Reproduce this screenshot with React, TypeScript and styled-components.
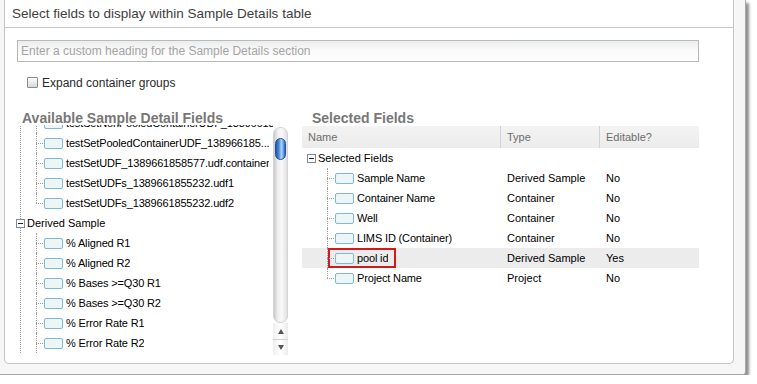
import styled, { createGlobalStyle } from "styled-components"

const GlobalStyle = createGlobalStyle`
	html, body {
		margin: 0;
		padding: 0;
		background: #fff;
	}
	body {
		font-family: "Liberation Sans", Arial, sans-serif;
	}
`

const Frame = styled.div`
	box-sizing: border-box;
	width: 746px;
	height: 375px;
	padding-left: 4px;
	background: #f6f6f6;
	border-right: 1px solid #a8a8a8;
	border-bottom: 1px solid #a8a8a8;
	border-bottom-right-radius: 3px;
	box-shadow: 3px 3px 3px rgba(0, 0, 0, 0.45);
`

const Panel = styled.div`
	box-sizing: border-box;
	width: 730px;
	height: 364px;
	background: #fff;
	border: 1px solid #c4c4c4;
	border-top: none;
	border-radius: 0 0 5px 5px;
	overflow: hidden;
`

const Header = styled.div`
	height: 27px;
	display: flex;
	align-items: center;
	padding-left: 7px;
	border-bottom: 1px solid #c6c6c6;
	font-size: 13.5px;
	color: #3e3e3e;
`

const HeadingInput = styled.input`
	display: block;
	box-sizing: border-box;
	width: 682px;
	height: 22px;
	margin: 12px 0 0 12px;
	padding: 0 3px;
	border: 1px solid #b9b9b9;
	background: linear-gradient(#eaecee, #f9f9f9 45%, #fff);
	font: 12px "Liberation Sans", Arial, sans-serif;
	color: #333;
	outline: none;

	&::placeholder {
		color: #a4a4a4;
	}
`

const CheckRow = styled.label`
	display: flex;
	align-items: center;
	gap: 4px;
	height: 11px;
	margin: 15px 0 0 22px;
	font-size: 12px;
	color: #2a2a2a;
`

const CheckBox = styled.span`
	box-sizing: border-box;
	width: 11px;
	height: 11px;
	border: 1px solid #8c8c8c;
	border-radius: 1px;
	background: linear-gradient(#fff, #d9d9d9);
`

const Columns = styled.div`
	display: grid;
	grid-template-columns: 272px 397px;
	column-gap: 14px;
	margin-top: 23px;
	padding-left: 11px;
`

const Column = styled.div`
	display: flex;
	flex-direction: column;
`

const SectionTitle = styled.div<{ $indent: number }>`
	height: 14px;
	line-height: 14px;
	padding-left: ${(p) => p.$indent}px;
	font-size: 14px;
	font-weight: bold;
	color: #777;
	white-space: nowrap;
`

const TreeViewport = styled.div`
	display: flex;
	height: 230px;
`

const TreeList = styled.div`
	flex: 1;
	overflow: hidden;
`

const TreeBody = styled.div`
	margin: -12px 0 0 4px;
	border-left: 1px dotted #9c9c9c;
`

const NodeRow = styled.div<{ $pad: number }>`
	display: flex;
	align-items: center;
	height: 20px;
	padding-left: ${(p) => p.$pad}px;
	font-size: 11px;
	color: #000;
	white-space: nowrap;
`

const Toggle = styled.span<{ $shift?: number }>`
	position: relative;
	flex: none;
	box-sizing: border-box;
	width: 9px;
	height: 9px;
	margin-left: ${(p) => p.$shift ?? 0}px;
	margin-right: 2px;
	border: 1px solid #7d8a99;
	background: #fff;

	&::after {
		content: "";
		position: absolute;
		left: 1px;
		right: 1px;
		top: 3px;
		height: 1px;
		background: #222;
	}
`

const LeafRow = styled.div<{ $line: number; $last?: boolean }>`
	position: relative;
	display: flex;
	align-items: center;
	height: 20px;
	padding-left: ${(p) => p.$line + 8}px;
	font-size: 11px;
	letter-spacing: -0.15px;
	color: #000;
	white-space: nowrap;

	&::before {
		content: "";
		position: absolute;
		left: ${(p) => p.$line}px;
		top: 0;
		height: ${(p) => (p.$last ? "10px" : "100%")};
		border-left: 1px dotted #9c9c9c;
	}

	&::after {
		content: "";
		position: absolute;
		left: ${(p) => p.$line}px;
		top: 10px;
		width: 7px;
		border-top: 1px dotted #9c9c9c;
	}
`

const FieldIcon = styled.span`
	flex: none;
	box-sizing: border-box;
	width: 19px;
	height: 11px;
	margin-right: 3px;
	border: 1px solid #7cbad6;
	border-radius: 2px;
	background: #eef5f7;
`

const Label = styled.span`
	overflow: hidden;
`

const Marked = styled.span`
	position: relative;
	display: flex;
	align-items: center;
	height: 100%;

	&::after {
		content: "";
		position: absolute;
		top: 0;
		bottom: 0;
		left: -7px;
		right: -8px;
		border: 2px solid #d11b1b;
	}
`

const Scrollbar = styled.div`
	flex: none;
	display: flex;
	flex-direction: column;
	width: 15px;
`

const Track = styled.div`
	flex: 1;
	box-sizing: border-box;
	margin-top: 2px;
	padding-top: 10px;
	border: 1px solid #d3d3d3;
	border-radius: 7px;
	background: linear-gradient(to right, #c8c8c8, #ececec 25%, #f9f9f9 60%, #e0e0e0);
`

const Thumb = styled.div`
	box-sizing: border-box;
	width: 11px;
	height: 22px;
	margin-left: 1px;
	border: 1px solid #244f95;
	border-radius: 6px;
	background: linear-gradient(to right, #1d54a8, #4f8fe0 35%, #b0d6fc 60%, #5b97e0 85%, #2b62b5);
`

const ArrowButton = styled.div<{ $down?: boolean }>`
	display: flex;
	align-items: center;
	justify-content: center;
	height: 15px;
	border-top: 1px solid ${(p) => (p.$down ? "#cfcfcf" : "transparent")};
	background: linear-gradient(to right, #efefef, #fff 50%, #ebebeb);

	&::before {
		content: "";
		border-left: 3px solid transparent;
		border-right: 3px solid transparent;
		${(p) => (p.$down ? "border-top: 5px solid #555;" : "border-bottom: 5px solid #555;")}
	}
`

const TableHead = styled.div`
	display: grid;
	grid-template-columns: 198px 99px 1fr;
	height: 22px;
	margin-top: 1px;
	background: linear-gradient(#f3f3f3, #ececec);
`

const HeadCell = styled.div<{ $first?: boolean }>`
	display: flex;
	align-items: center;
	padding-left: 6px;
	border-left: ${(p) => (p.$first ? "none" : "1px solid #d2d2d2")};
	font-size: 11px;
	color: #6c6c6c;
`

const TableRow = styled.div<{ $selected?: boolean }>`
	display: grid;
	grid-template-columns: 198px 99px 1fr;
	height: 20px;
	background: ${(p) => (p.$selected ? "#ececec" : "transparent")};
`

const Cell = styled.div`
	display: flex;
	align-items: center;
	padding-left: 7px;
	font-size: 11px;
	color: #000;
	white-space: nowrap;
`

const availableTop = [
	"testSetNonPooledContainerUDF_138966185...",
	"testSetPooledContainerUDF_138966185...",
	"testSetUDF_1389661858577.udf.container",
	"testSetUDFs_1389661855232.udf1",
	"testSetUDFs_1389661855232.udf2"
]

const derived = [
	"% Aligned R1",
	"% Aligned R2",
	"% Bases >=Q30 R1",
	"% Bases >=Q30 R2",
	"% Error Rate R1",
	"% Error Rate R2"
]

const selected = [
	{ name: "Sample Name", type: "Derived Sample", editable: "No" },
	{ name: "Container Name", type: "Container", editable: "No" },
	{ name: "Well", type: "Container", editable: "No" },
	{ name: "LIMS ID (Container)", type: "Container", editable: "No" },
	{ name: "pool id", type: "Derived Sample", editable: "Yes", marked: true },
	{ name: "Project Name", type: "Project", editable: "No" }
]

export default function App() {
	return (
		<>
			<GlobalStyle />
			<Frame>
				<Panel>
					<Header>Select fields to display within Sample Details table</Header>
					<HeadingInput placeholder="Enter a custom heading for the Sample Details section" />
					<CheckRow>
						<CheckBox />
						Expand container groups
					</CheckRow>
					<Columns>
						<Column>
							<SectionTitle $indent={6}>Available Sample Detail Fields</SectionTitle>
							<TreeViewport>
								<TreeList>
									<TreeBody>
										{availableTop.map((field, i) => (
											<LeafRow key={field} $line={15} $last={i === availableTop.length - 1}>
												<FieldIcon />
												<Label>{field}</Label>
											</LeafRow>
										))}
										<NodeRow $pad={0}>
											<Toggle $shift={-5} />
											Derived Sample
										</NodeRow>
										{derived.map((field) => (
											<LeafRow key={field} $line={15}>
												<FieldIcon />
												<Label>{field}</Label>
											</LeafRow>
										))}
									</TreeBody>
								</TreeList>
								<Scrollbar>
									<Track>
										<Thumb />
									</Track>
									<ArrowButton />
									<ArrowButton $down />
								</Scrollbar>
							</TreeViewport>
						</Column>
						<Column>
							<SectionTitle $indent={10}>Selected Fields</SectionTitle>
							<TableHead>
								<HeadCell $first>Name</HeadCell>
								<HeadCell>Type</HeadCell>
								<HeadCell>Editable?</HeadCell>
							</TableHead>
							<TableRow>
								<NodeRow $pad={5}>
									<Toggle />
									Selected Fields
								</NodeRow>
							</TableRow>
							{selected.map((row, i) => (
								<TableRow key={row.name} $selected={row.marked}>
									<LeafRow $line={25} $last={i === selected.length - 1}>
										{row.marked ? (
											<Marked>
												<FieldIcon />
												<Label>{row.name}</Label>
											</Marked>
										) : (
											<>
												<FieldIcon />
												<Label>{row.name}</Label>
											</>
										)}
									</LeafRow>
									<Cell>{row.type}</Cell>
									<Cell>{row.editable}</Cell>
								</TableRow>
							))}
						</Column>
					</Columns>
				</Panel>
			</Frame>
		</>
	)
}
